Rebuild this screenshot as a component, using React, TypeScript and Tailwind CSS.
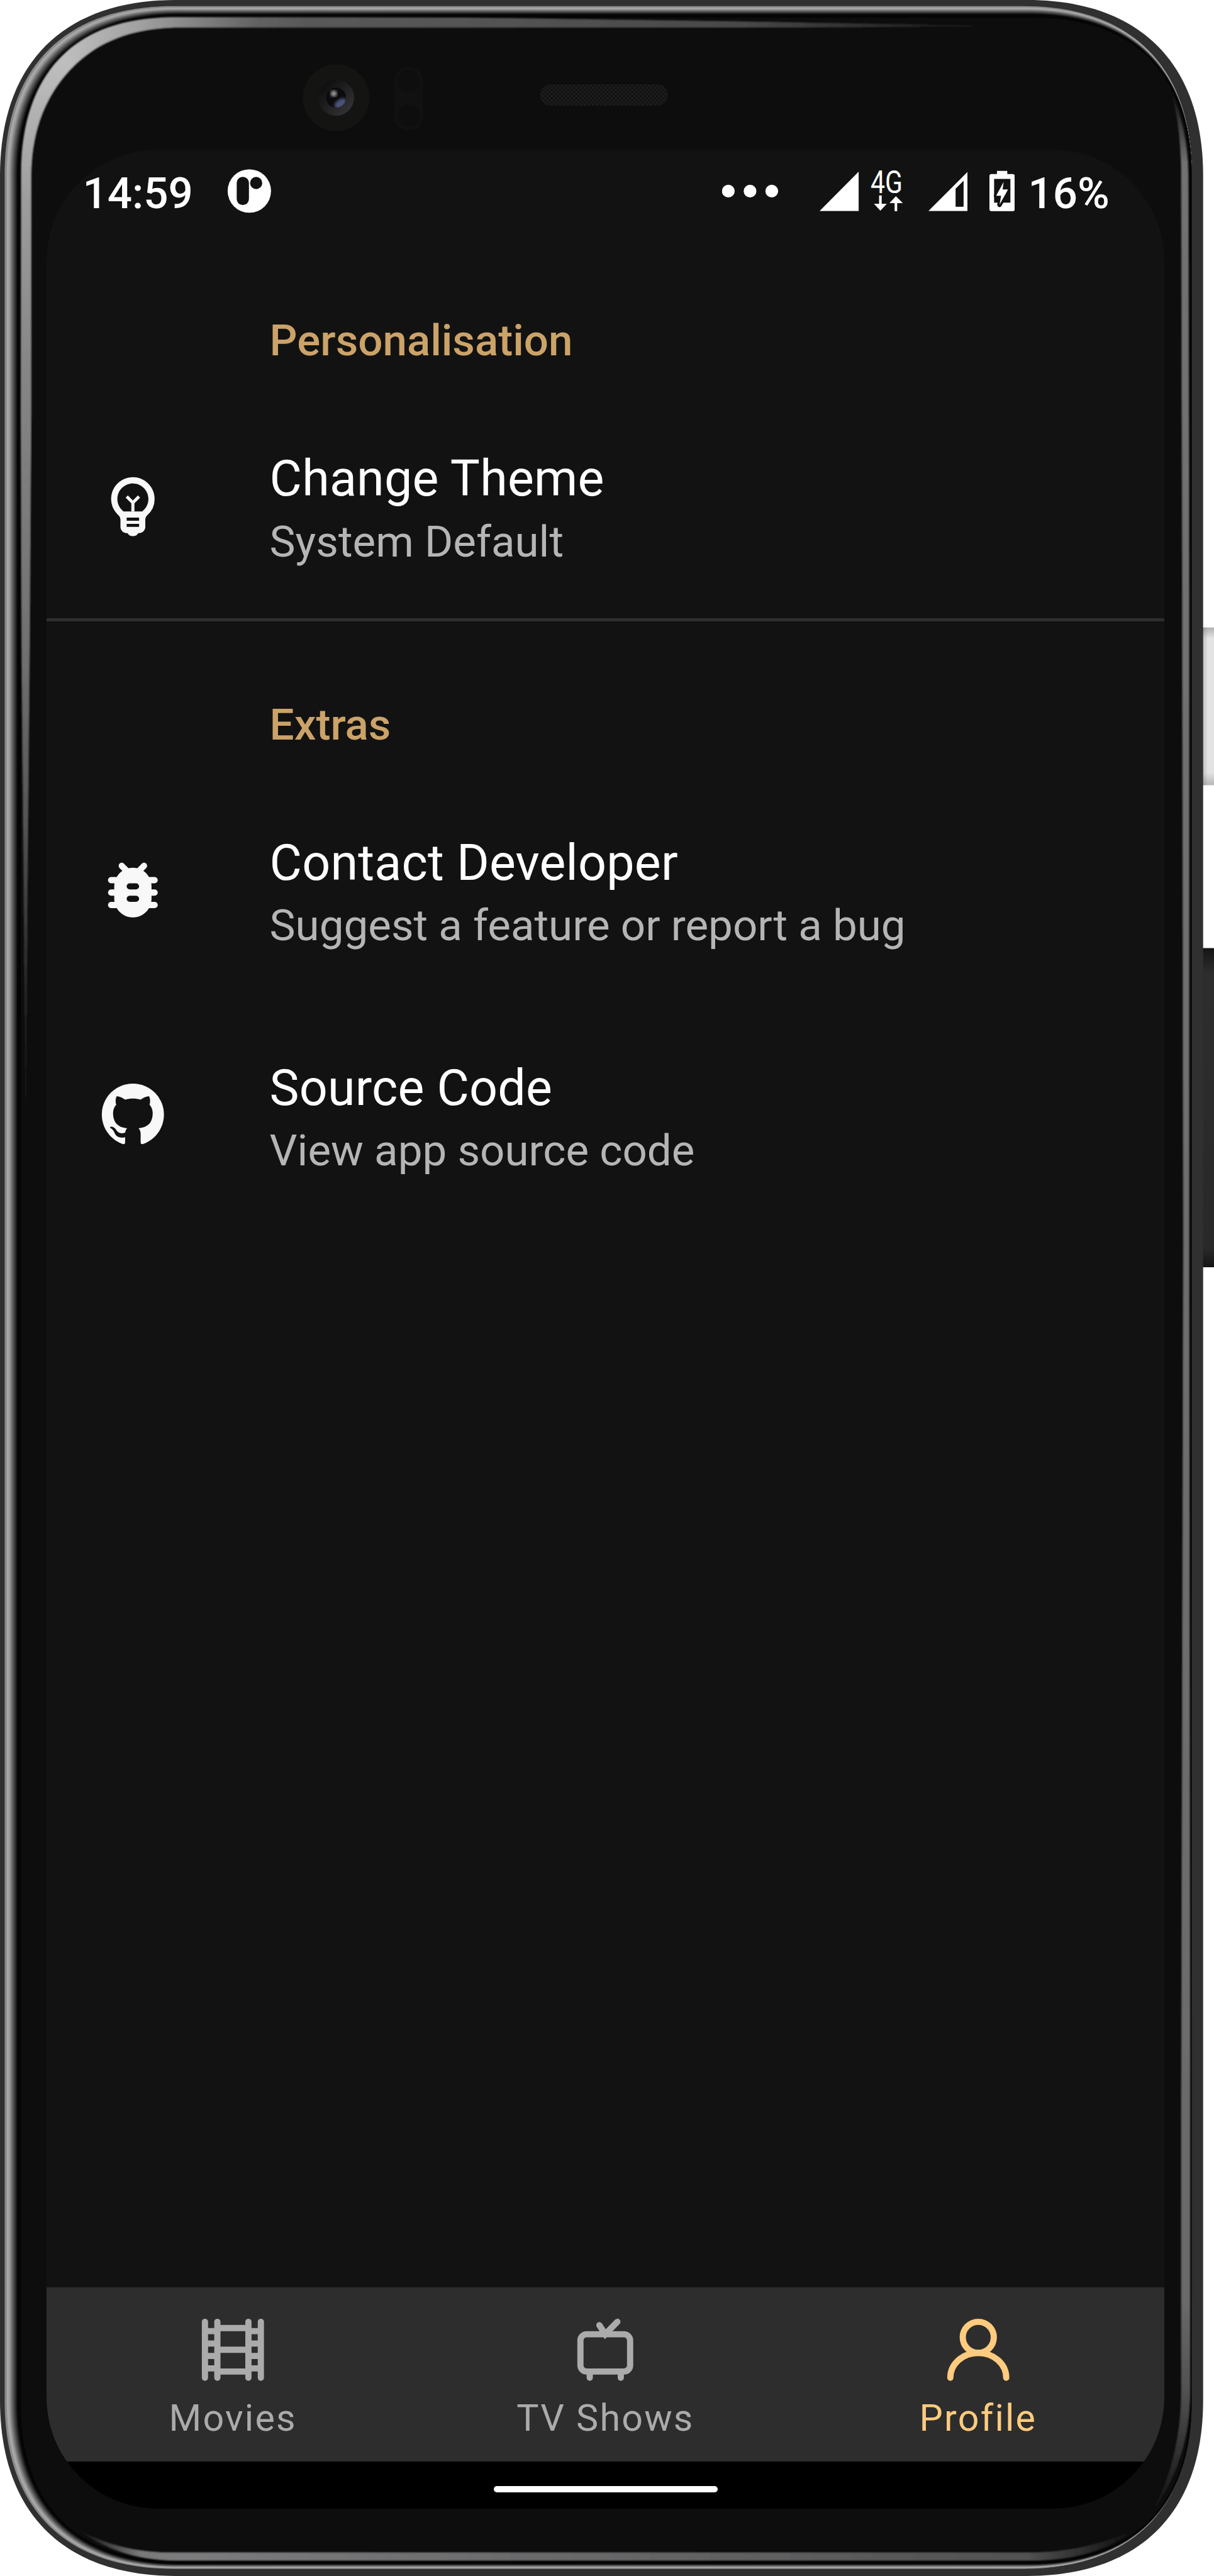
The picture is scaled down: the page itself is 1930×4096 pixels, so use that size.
import React from "react";
import { MdOutlineEmojiObjects } from "react-icons/md";

/** Closed outline of a soft-cornered rectangle; d is the length of each corner. */
function squircle(l: number, t: number, r: number, b: number, d: number): string {
  const k = d * 0.36;
  return [
    `M${l} ${t + d}`,
    `C${l} ${t + k} ${l + k} ${t} ${l + d} ${t}`,
    `L${r - d} ${t}`,
    `C${r - k} ${t} ${r} ${t + k} ${r} ${t + d}`,
    `L${r} ${b - d}`,
    `C${r} ${b - k} ${r - k} ${b} ${r - d} ${b}`,
    `L${l + d} ${b}`,
    `C${l + k} ${b} ${l} ${b - k} ${l} ${b - d}`,
    "Z",
  ].join(" ");
}

// Brightness of the polished rim from its outer edge (0) to its inner edge (1).
const RIM: [number, number][] = [
  [0, 138],
  [0.14, 140],
  [0.18, 174],
  [0.35, 160],
  [0.55, 112],
  [0.8, 56],
  [1, 12],
];

function rimShade(t: number): string {
  let i = 0;
  while (i < RIM.length - 2 && t > RIM[i + 1][0]) i++;
  const [t0, v0] = RIM[i];
  const [t1, v1] = RIM[i + 1];
  const v = Math.round(v0 + ((v1 - v0) * (t - t0)) / (t1 - t0));
  return `rgb(${v},${v},${v})`;
}

function DeviceFrame() {
  const steps = Array.from({ length: 25 }, (_, i) => i / 24);
  return (
    <svg
      className="absolute inset-0 h-full w-full"
      viewBox="0 0 2346 4980"
      preserveAspectRatio="none"
      aria-hidden="true"
    >
      <defs>
        <linearGradient id="powerX" x1="0" x2="1" y1="0" y2="0">
          <stop offset="0" stopColor="#a8a8a8" />
          <stop offset="0.5" stopColor="#e3e3e3" />
        </linearGradient>
        <linearGradient id="powerY" x1="0" x2="0" y1="0" y2="1">
          <stop offset="0" stopColor="#000" stopOpacity="0.22" />
          <stop offset="0.07" stopColor="#000" stopOpacity="0" />
          <stop offset="0.92" stopColor="#000" stopOpacity="0" />
          <stop offset="1" stopColor="#000" stopOpacity="0.2" />
        </linearGradient>
        <linearGradient id="volume" x1="0" x2="0" y1="0" y2="1">
          <stop offset="0" stopColor="#151515" />
          <stop offset="0.08" stopColor="#2d2d2d" />
          <stop offset="0.94" stopColor="#292929" />
          <stop offset="1" stopColor="#141414" />
        </linearGradient>
        <linearGradient id="glowLeft" gradientUnits="userSpaceOnUse" x1="0" x2="0" y1="120" y2="2220">
          <stop offset="0" stopColor="#bebebe" />
          <stop offset="0.13" stopColor="#9c9c9c" />
          <stop offset="0.28" stopColor="#868686" />
          <stop offset="0.55" stopColor="#707070" />
          <stop offset="0.7" stopColor="#555" />
          <stop offset="0.85" stopColor="#2a2a2a" />
          <stop offset="1" stopColor="#0d0d0f" />
        </linearGradient>
        <linearGradient id="glowTop" gradientUnits="userSpaceOnUse" x1="125" x2="1980" y1="0" y2="0">
          <stop offset="0" stopColor="#bebebe" />
          <stop offset="0.08" stopColor="#a0a0a0" />
          <stop offset="0.2" stopColor="#626262" />
          <stop offset="0.24" stopColor="#5a5a5a" />
          <stop offset="0.7" stopColor="#4a4a4a" />
          <stop offset="1" stopColor="#0d0d0f" />
        </linearGradient>
        <linearGradient id="glowRight" gradientUnits="userSpaceOnUse" x1="0" x2="0" y1="175" y2="4865">
          <stop offset="0" stopColor="#0d0d0f" />
          <stop offset="0.03" stopColor="#727272" />
          <stop offset="0.91" stopColor="#6b6b6c" />
          <stop offset="0.95" stopColor="#505051" />
          <stop offset="1" stopColor="#0d0d0f" />
        </linearGradient>
        <linearGradient id="glowBottom" gradientUnits="userSpaceOnUse" x1="150" x2="2190" y1="0" y2="0">
          <stop offset="0" stopColor="#0d0d0f" />
          <stop offset="0.06" stopColor="#7a7a7a" />
          <stop offset="0.1" stopColor="#7c7c7e" />
          <stop offset="0.9" stopColor="#525252" />
          <stop offset="1" stopColor="#0d0d0f" />
        </linearGradient>
        <linearGradient id="lens" x1="0.1" x2="0.9" y1="0.1" y2="0.9">
          <stop offset="0.1" stopColor="#101010" />
          <stop offset="1" stopColor="#343438" />
        </linearGradient>
        <pattern id="mesh" width="8" height="8" patternUnits="userSpaceOnUse">
          <rect width="8" height="8" fill="#101010" />
          <rect width="4" height="4" fill="#1e1e1e" />
          <rect x="4" y="4" width="4" height="4" fill="#1e1e1e" />
        </pattern>
        <filter id="soft">
          <feGaussianBlur stdDeviation="2.5" />
        </filter>
        <filter id="edge" filterUnits="userSpaceOnUse" x="0" y="0" width="2346" height="4980">
          <feGaussianBlur stdDeviation="1" />
        </filter>
        <clipPath id="pupil">
          <circle cx="649.6" cy="188.8" r="19.5" />
        </clipPath>
      </defs>

      <rect x="2318" y="1213" width="32" height="305" rx="5" fill="url(#powerX)" />
      <rect x="2318" y="1213" width="32" height="305" rx="5" fill="url(#powerY)" />
      <rect x="2318" y="1833" width="31" height="617" rx="5" fill="url(#volume)" />

      <path d={squircle(0, 0, 2325, 4980, 340)} fill="#303030" />
      {steps.map((t) => (
        <path
          key={t}
          d={squircle(9 + 24 * t, 12 + 15 * t, 2303, 4966 - 9 * t, 325 - 12 * t)}
          fill={rimShade(t)}
        />
      ))}
      <path d={squircle(34, 28, 2302, 4956, 312)} fill="#050506" />
      <g filter="url(#edge)">
        <path d={squircle(40, 34, 2299, 4951, 302)} fill="#0d0d0f" />
        <path
          d="M50 2220 L46 1700 L42 1250 L40 800 L41 333 C41 225 75 152 120 108 L142 128 C90 180 60 250 60 343 L60 800 L57 1250 L53 1700 Z"
          fill="url(#glowLeft)"
        />
        <path
          d="M119 109 C165 62 235 33 341 33 L900 34 L1500 43 L1980 51 L1500 53 L350 53 C255 53 190 80 141 129 Z"
          fill="url(#glowTop)"
        />
        <path
          d="M2263 175 C2283 225 2296 275 2296 345 L2298 1150 L2298 2400 L2300 3900 L2300 4622 C2300 4700 2280 4785 2223 4862 C2262 4795 2283 4710 2283 4622 L2283 4100 L2287 2400 L2285 1150 L2283 320 C2281 260 2275 220 2263 175 Z"
          fill="url(#glowRight)"
        />
        <path
          d="M150 4891 C205 4918 255 4935 330 4935 L1985 4935 C2065 4935 2130 4918 2192 4891 C2135 4934 2070 4950 1985 4950 L345 4950 C265 4950 205 4928 150 4891 Z"
          fill="url(#glowBottom)"
        />
      </g>

      <circle cx="649.7" cy="189" r="64.5" fill="#141413" />
      <circle cx="649.6" cy="188.8" r="34.7" fill="url(#lens)" />
      <g clipPath="url(#pupil)">
        <circle cx="649.6" cy="188.8" r="19.5" fill="#0b0b0d" />
        <circle cx="645" cy="181" r="6" fill="#9a9a9a" filter="url(#soft)" />
        <ellipse cx="658" cy="200" rx="13" ry="8" fill="#4a5478" transform="rotate(-35 658 200)" filter="url(#soft)" />
      </g>
      <rect x="762" y="128.7" width="55" height="123.3" rx="27.5" fill="#111111" />
      <circle cx="789.7" cy="156.7" r="22" fill="#0e0e0f" />
      <circle cx="789.7" cy="224" r="22" fill="#0e0e0f" />
      <rect x="1044.5" y="163.500" width="245" height="40" rx="19" fill="url(#mesh)" stroke="#1b1b1c" />
    </svg>
  );
}

function StatusBar() {
  return (
    <div className="flex h-[138.6px] shrink-0 items-start pt-[30.4px] text-[69.1px] font-medium text-white">
      <span className="ml-[57.5px] w-[178px] leading-[80.3px]">14:59</span>
      <svg className="ml-[51px] h-[70.7px] w-[70.8px]" viewBox="439 326 86 86">
        <circle cx="482" cy="369.5" r="42" fill="#fff" />
        <rect x="457.6" y="342" width="23.6" height="54.5" rx="11.5" fill="#121212" />
        <circle cx="495.2" cy="354" r="11.8" fill="#121212" />
      </svg>
      <div className="mr-[87px] ml-auto flex items-start">
        <svg className="h-[70.7px] w-[88.8px]" viewBox="1396 326 108 86" fill="#fff">
          <circle cx="1408" cy="369.7" r="12.3" />
          <circle cx="1450" cy="369.7" r="12.3" />
          <circle cx="1492" cy="369.7" r="12.3" />
        </svg>
        <svg className="ml-[66.6px] h-[70.7px] w-[62.5px]" viewBox="1585 326 76 86" fill="#fff">
          <path d="M1660.5 332V408H1585Z" />
        </svg>
        <svg className="ml-[18.9px] h-[70.7px] w-[51.8px] overflow-visible" viewBox="1684 326 63 86" fill="#fff">
          <text
            x="1684"
            y="373"
            fontFamily="Roboto"
            fontSize="60"
            fontWeight="400"
            textLength="62"
            lengthAdjust="spacingAndGlyphs"
          >
            4G
          </text>
          <path d="M1700.5 378h5v16h10l-12.500 13.500-12.500-13.500h10z" />
          <path d="M1730.500 408.500h5v-15.500h11l-13.500-13.500-12.500 13.500h10z" />
        </svg>
        <svg className="ml-[39.5px] h-[70.7px] w-[62.5px]" viewBox="1795 326 76 86" fill="#fff">
          <path fillRule="evenodd" d="M1871 332V408H1795ZM1863 349.500L1847.500 365V400H1863Z" />
        </svg>
        <svg className="ml-[34.5px] h-[70.7px] w-[40.3px]" viewBox="1913 326 49 86">
          <path
            d="M1927.500 330.500h20v6h10.500q4 0 4 4v64q0 4-4 4h-41q-4 0-4-4v-64q0-4 4-4h10.500z"
            fill="#fff"
          />
          <path d="M1922 346h31.500v46H1922z" fill="#121212" />
          <path
            d="M1940.500 352L1938.500 366.500H1949L1932.500 396L1935.500 378.500H1926Z"
            fill="#fff"
            stroke="#121212"
            strokeWidth="9"
            strokeLinejoin="round"
            paintOrder="stroke"
          />
        </svg>
        <span className="ml-[21.5px] leading-[80.3px]">16%</span>
      </div>
    </div>
  );
}

function SectionHeader({ children }: { children: React.ReactNode }) {
  return (
    <h2 className="h-[248px] shrink-0 pt-[125px] pl-[354.6px] text-[69.1px] leading-[82px] font-medium text-[#cba268]">
      {children}
    </h2>
  );
}

function SettingRow({ icon, title, detail }: { icon: React.ReactNode; title: string; detail: string }) {
  return (
    <div className="flex h-[357.8px] shrink-0 items-center">
      <div className="ml-[78px] flex w-[276.6px] text-[#f8f8f8]">{icon}</div>
      <div className="flex flex-col gap-[13.2px] self-start pt-[91.1px]">
        <span className="text-[79px] leading-[92px] tracking-[0.2px] text-white">{title}</span>
        <span className="text-[69.1px] leading-[82px] text-[#b5b5b5]">{detail}</span>
      </div>
    </div>
  );
}

function BugIcon() {
  return (
    <svg className="h-[118.5px] w-[118.5px]" viewBox="0 0 24 24" fill="currentColor">
      <path d="M19 8h-1.81c-.45-.78-1.07-1.45-1.82-1.96l.93-.93c.39-.39.39-1.02 0-1.41-.39-.39-1.02-.39-1.41 0l-1.47 1.47C12.96 5.06 12.49 5 12 5s-.96.06-1.41.17L9.11 3.7c-.39-.39-1.02-.39-1.41 0-.39.39-.39 1.02 0 1.41l.92.93C7.88 6.55 7.26 7.22 6.81 8H5c-.55 0-1 .45-1 1s.45 1 1 1h1.090c-.05.33-.09.66-.09 1v1H5c-.55 0-1 .45-1 1s.45 1 1 1h1v1c0 .34.04.67.09 1H5c-.55 0-1 .45-1 1s.45 1 1 1h1.810c1.040 1.790 2.970 3 5.190 3s4.150-1.210 5.190-3H19c.55 0 1-.45 1-1s-.45-1-1-1h-1.090c.05-.33.09-.66.09-1v-1h1c.55 0 1-.45 1-1s-.45-1-1-1h-1v-1c0-.34-.04-.67-.09-1H19c.55 0 1-.45 1-1s-.45-1-1-1zm-6 8h-2c-.55 0-1-.45-1-1s.45-1 1-1h2c.55 0 1 .45 1 1s-.45 1-1 1zm0-4h-2c-.55 0-1-.45-1-1s.45-1 1-1h2c.55 0 1 .45 1 1s-.45 1-1 1z" />
    </svg>
  );
}

function GithubIcon() {
  return (
    <svg className="h-[118.5px] w-[118.5px]" viewBox="0 0 24 24" fill="currentColor">
      <path d="M12 2A10 10 0 0 0 2 12c0 4.42 2.87 8.17 6.84 9.5.5.08.66-.23.66-.5v-1.69c-2.77.6-3.36-1.34-3.36-1.34-.46-1.16-1.11-1.47-1.11-1.47-.91-.62.07-.6.07-.6 1 .07 1.53 1.03 1.53 1.03.87 1.52 2.34 1.07 2.91.83.09-.65.35-1.09.63-1.34-2.22-.25-4.55-1.11-4.55-4.92 0-1.11.38-2 1.03-2.71-.1-.25-.45-1.29.1-2.64 0 0 .84-.27 2.75 1.02.79-.22 1.65-.33 2.5-.33s1.71.11 2.5.33c1.91-1.29 2.75-1.02 2.75-1.02.55 1.35.2 2.39.1 2.64.65.71 1.03 1.6 1.03 2.71 0 3.82-2.34 4.66-4.57 4.91.36.31.69.92.69 1.85V21c0 .27.16.59.67.5C19.14 20.16 22 16.42 22 12A10 10 0 0 0 12 2" />
    </svg>
  );
}

function FilmIcon() {
  return (
    <svg className="h-[118.5px] w-[118.5px]" viewBox="0 0 24 24" fill="none" stroke="currentColor" strokeWidth="2">
      <path strokeLinecap="round" d="M3 3v18M7 3v18M17 3v18M21 3v18" />
      <path d="M7 5h10M7 12h10M7 19h10M3 6h4M3 10h4M3 14h4M3 18h4M17 6h4M17 10h4M17 14h4M17 18h4" />
    </svg>
  );
}

function TvIcon() {
  return (
    <svg
      className="h-[118.5px] w-[118.5px]"
      viewBox="0 0 24 24"
      fill="none"
      stroke="currentColor"
      strokeWidth="2"
      strokeLinecap="round"
    >
      <rect x="4" y="7" width="16" height="12" rx="2" />
      <path d="M7 20v1M17 20v1M10.100 4.100L12 7l3.900-4" />
    </svg>
  );
}

function ProfileIcon() {
  return (
    <svg
      className="h-[118.5px] w-[118.5px]"
      viewBox="0 0 24 24"
      fill="none"
      stroke="currentColor"
      strokeWidth="2"
      strokeLinecap="round"
    >
      <circle cx="12" cy="8" r="5" />
      <path d="M3 21a9 8 0 0 1 18 0" />
    </svg>
  );
}

function NavItem({ icon, label, active }: { icon: React.ReactNode; label: string; active?: boolean }) {
  return (
    <div
      className={
        active
          ? "flex flex-1 flex-col items-center gap-[14.3px] pt-[40.2px] text-[#ffcb7f]"
          : "flex flex-1 flex-col items-center gap-[14.3px] pt-[40.2px] text-[#ababab]"
      }
    >
      {icon}
      <span className="text-[59.2px] leading-[70px] tracking-[2.2px]">{label}</span>
    </div>
  );
}

export default function App() {
  return (
    <div className="relative h-[4096px] w-[1930px] overflow-hidden bg-white font-['Roboto',sans-serif]">
      <DeviceFrame />
      <div className="relative flex h-full flex-col pt-[237.7px] pl-[74px]">
        <div className="flex h-[3751px] w-[1777px] flex-col overflow-hidden rounded-[177px] bg-[#121212]">
          <StatusBar />
          <SectionHeader>Personalisation</SectionHeader>
          <SettingRow
            icon={<MdOutlineEmojiObjects className="h-[118.5px] w-[118.5px]" />}
            title="Change Theme"
            detail="System Default"
          />
          <div className="mt-px -mb-px h-[5px] shrink-0 bg-[#2e2e2e]" />
          <SectionHeader>Extras</SectionHeader>
          <SettingRow icon={<BugIcon />} title="Contact Developer" detail="Suggest a feature or report a bug" />
          <SettingRow icon={<GithubIcon />} title="Source Code" detail="View app source code" />
          <nav className="mt-auto flex h-[277.600px] shrink-0 bg-[#2d2d2d]">
            <NavItem icon={<FilmIcon />} label="Movies" />
            <NavItem icon={<TvIcon />} label="TV Shows" />
            <NavItem icon={<ProfileIcon />} label="Profile" active />
          </nav>
          <div className="flex h-[74.400px] shrink-0 items-center justify-center bg-black">
            <div className="mt-[13px] h-[10px] w-[356px] rounded-full bg-white" />
          </div>
        </div>
      </div>
    </div>
  );
}
